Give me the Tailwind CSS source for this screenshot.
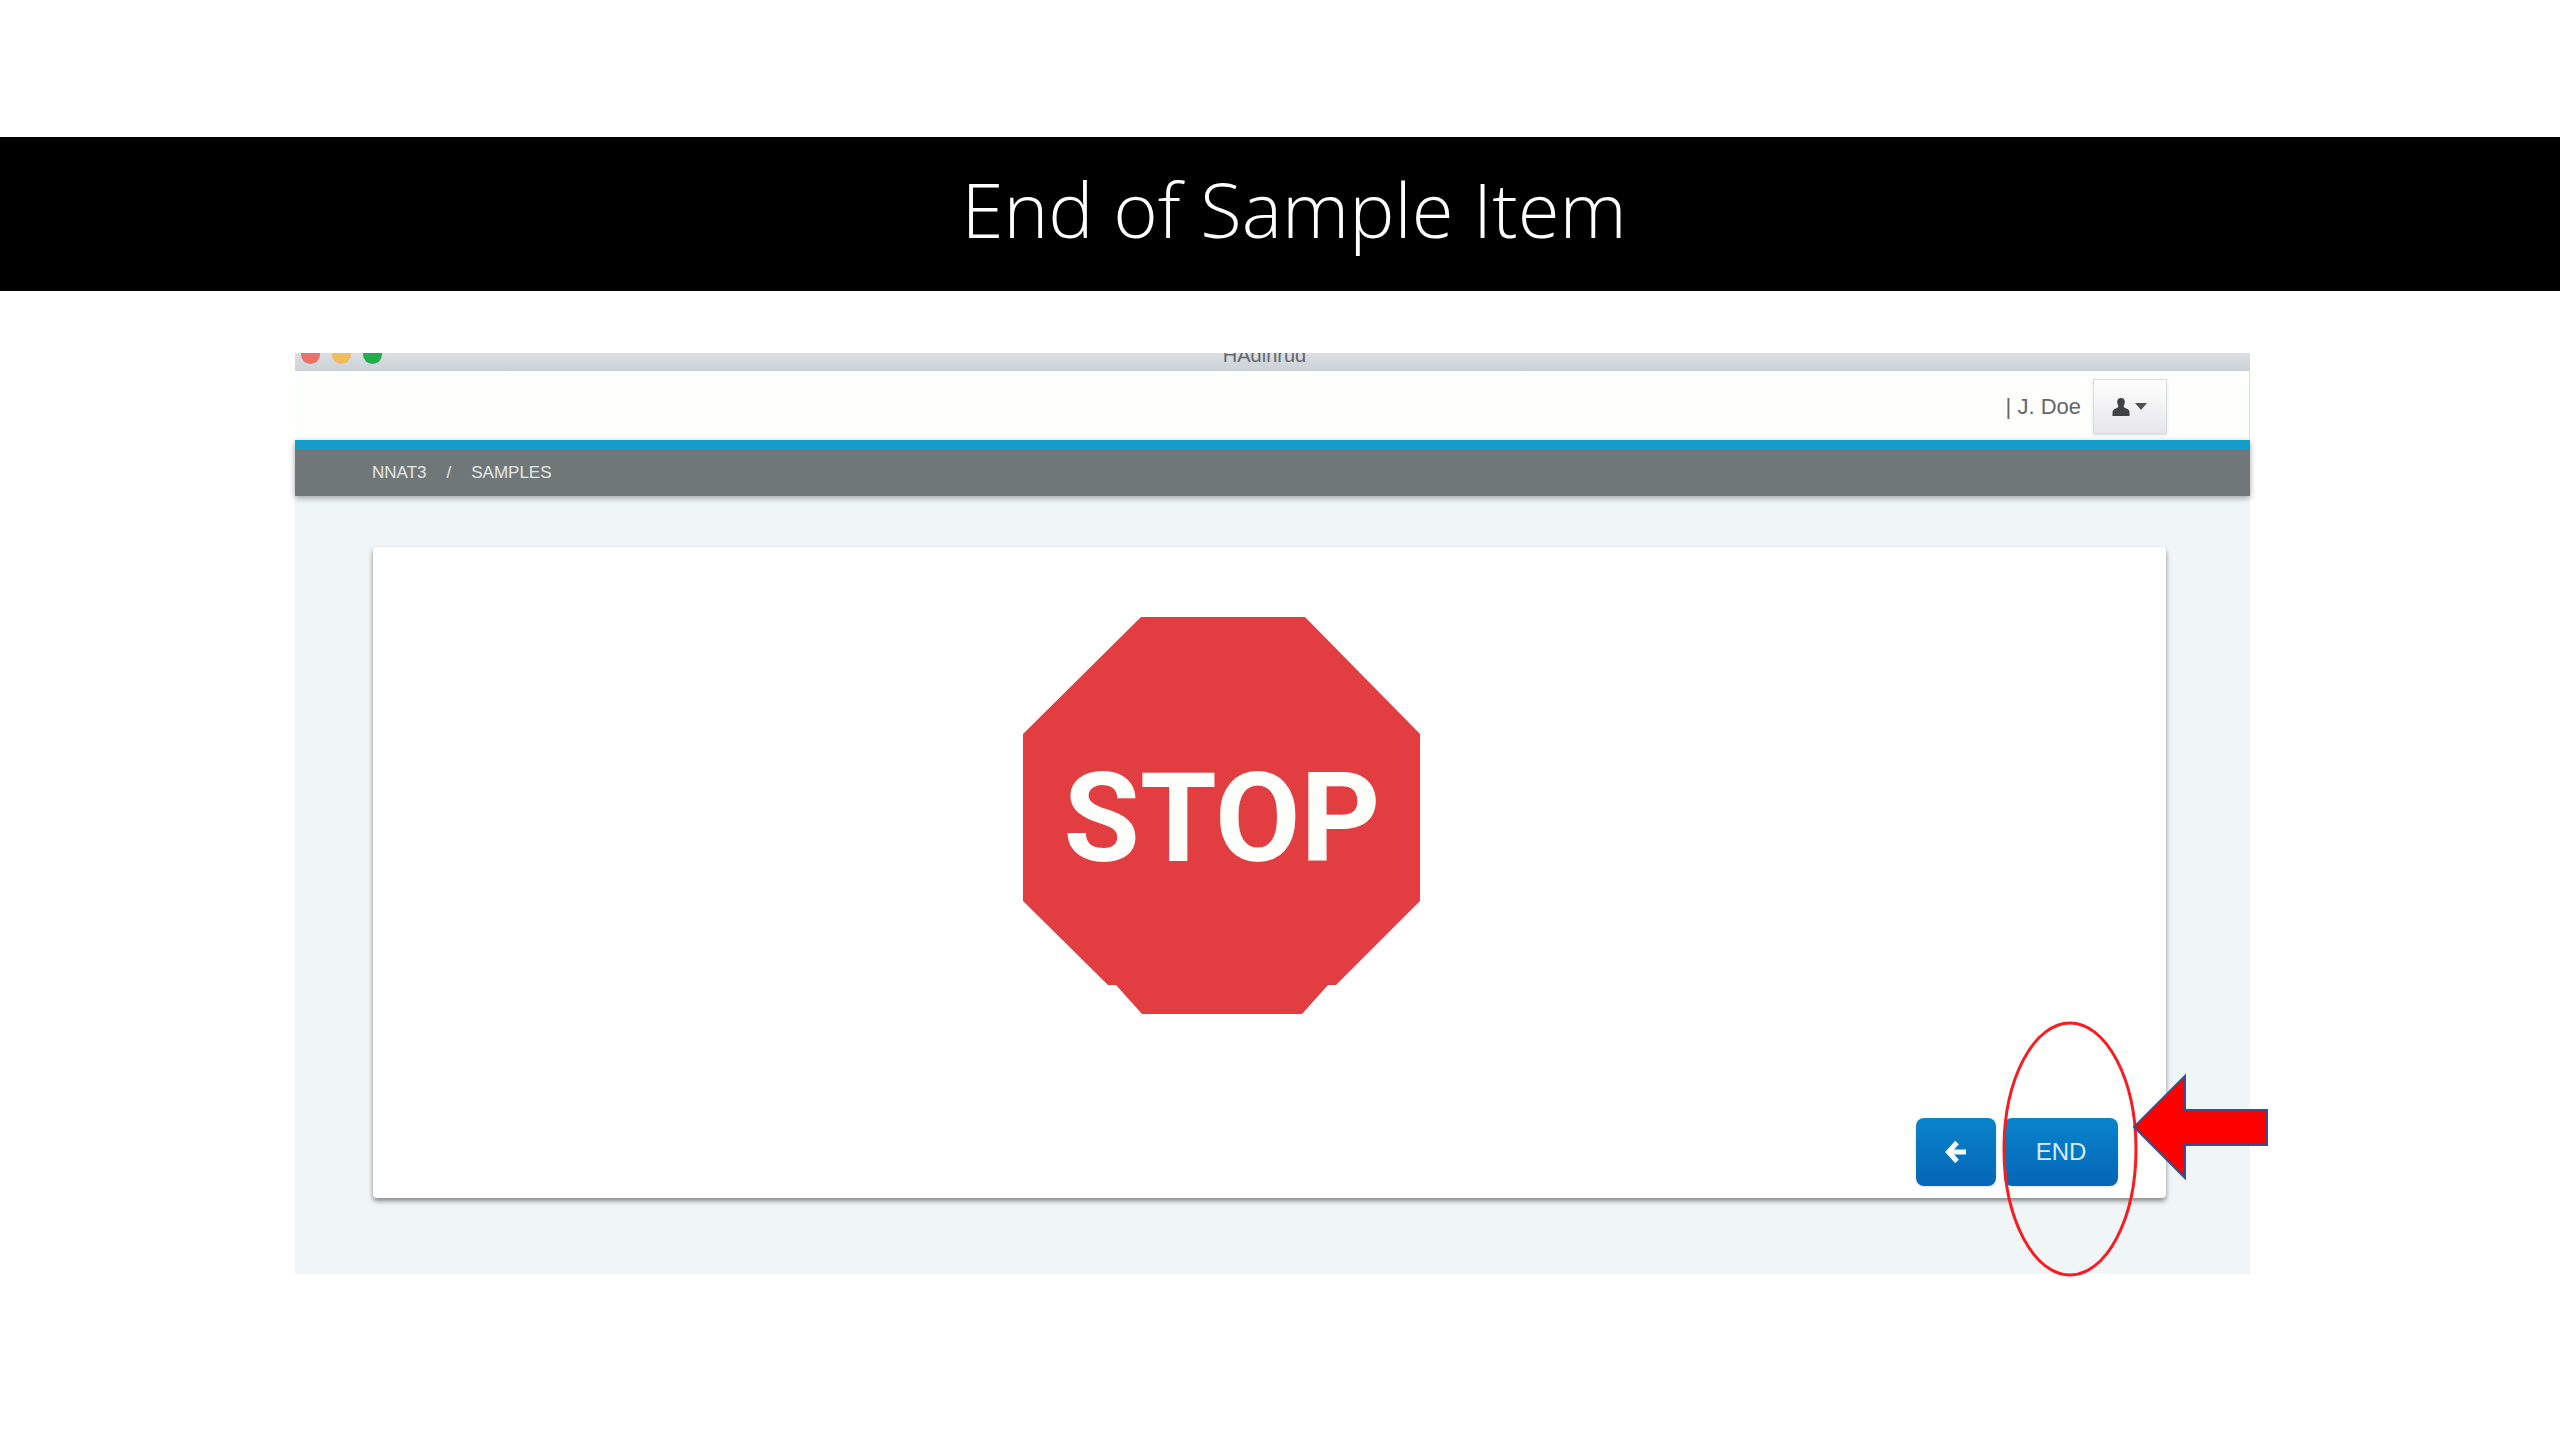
<!DOCTYPE html>
<html lang="en">
<head>
    <meta charset="UTF-8">
    <meta name="viewport" content="width=device-width, initial-scale=1.0">
    <title>End of Sample Item</title>
    <script src="https://cdn.jsdelivr.net/npm/@tailwindcss/browser@4"></script>
</head>
<body class="min-h-screen bg-white font-['Liberation_Sans',sans-serif]">
    <!-- Slide title -->
    <header class="mt-[137px] flex h-[154px] items-center justify-center bg-black pl-7">
        <h1 class="pb-2.5 font-['Open_Sans',sans-serif] text-[76px] leading-none font-light text-white">End of Sample Item</h1>
    </header>

    <main class="pt-[62px] pr-[310px] pl-[295px]">
        <div class="relative bg-[#f0f5f8]">
            <!-- Window title bar -->
            <div class="relative flex h-[18px] items-end justify-center overflow-hidden bg-linear-to-b from-[#dadfe3] to-[#cbd1d4]">
                <div class="absolute -top-2 left-1.5 flex gap-3">
                    <span class="size-[19px] rounded-full bg-[#ea7068]"></span>
                    <span class="size-[19px] rounded-full bg-[#efbd5c]"></span>
                    <span class="size-[19px] rounded-full bg-[#23ab50]"></span>
                </div>
                <span class="pr-4 pb-1.5 text-[20px] leading-5 text-[#63686c]">HAdinrud</span>
            </div>

            <!-- User bar -->
            <div class="flex h-[69px] items-center justify-end gap-3 border-r border-[#dcdfe1] bg-[#fdfffd] pt-0.5 pr-[82px]">
                <span class="text-[22px] text-[#666]">| J. Doe</span>
                <button type="button" aria-label="User menu" class="flex h-[55px] w-[74px] items-center justify-center gap-1 border border-[#dcdcdf] bg-linear-to-b from-white to-[#e6e6ec] shadow-sm">
                    <svg class="h-[18px] w-[18px] fill-[#3f4342]" viewBox="0 0 18 18"><path d="M9 0C6.500 0 5.200 1.500 5.200 3.800C5.200 5.500 5.700 6.700 6.400 7.800L5.800 9.500L2.500 11C1 12 .5 13 .5 14.500V18H17.500V14.500C17.500 13 17 12 15.500 11L12.200 9.500L11.600 7.800C12.300 6.700 12.800 5.500 12.800 3.800C12.800 1.500 11.500 0 9 0Z"/></svg>
                    <svg class="h-[7px] w-[14px] fill-[#4d5150]" viewBox="0 0 14 7"><path d="M1 0H13L7 7Z"/></svg>
                </button>
            </div>

            <!-- Breadcrumb -->
            <nav aria-label="Breadcrumb" class="flex h-14 items-center gap-5 border-t-9 border-[#159cc8] bg-[#707778] pl-[77px] text-[17px] text-[#e4e8e5] shadow-[0_2px_6px_rgba(0,0,0,0.35)]">
                <a href="#nnat3">NNAT3</a>
                <span>/</span>
                <a href="#samples">SAMPLES</a>
            </nav>

            <!-- Sample item -->
            <div class="pt-[51px] pr-[84px] pb-[76px] pl-[78px]">
                <section class="rounded-sm bg-[#fefffe] pt-[70px] pr-12 pb-3 shadow-[0_3px_5px_rgba(0,0,0,0.45)]">
                    <div class="flex justify-center pr-12">
                        <svg class="h-[397px] w-[397px]" viewBox="0 0 397 397" role="img" aria-label="Stop sign">
                            <path d="M118 0H282L397 117V284L313 368H305L279 397H119L93 368H85L0 284V117Z" fill="#e23d40"/>
                            <text x="199" y="244" text-anchor="middle" fill="#fefefa" font-family="Roboto, sans-serif" font-size="124" font-weight="700">STOP</text>
                        </svg>
                    </div>
                    <div class="mt-[104px] flex justify-end gap-2">
                        <button type="button" aria-label="Back" class="flex h-[68px] w-20 items-center justify-center rounded-lg bg-linear-to-b from-[#0a84cc] to-[#0566b6] shadow-sm">
                            <svg class="h-[22px] w-[22px] fill-none stroke-[#f4faff] stroke-5" viewBox="0 0 22 22"><path d="M12 1.500L3.500 11L12 20.500M4 11H21"/></svg>
                        </button>
                        <button type="button" class="h-[68px] w-[114px] rounded-lg bg-linear-to-b from-[#0a84cc] to-[#0566b6] text-2xl text-[#d8ecfa] shadow-sm">END</button>
                    </div>
                </section>
            </div>

            <!-- Callout around the END button -->
            <svg class="absolute -right-5 -bottom-1 h-[260px] w-[268px]" viewBox="0 0 268 260" aria-hidden="true">
                <ellipse cx="68" cy="131" rx="66" ry="126" fill="none" stroke="#fb1a1e" stroke-width="3"/>
                <path d="M132 109L183 58V92H265V127H183V160Z" fill="#fe0000" stroke="#3a4f8a" stroke-width="2"/>
            </svg>
        </div>
    </main>
</body>
</html>
